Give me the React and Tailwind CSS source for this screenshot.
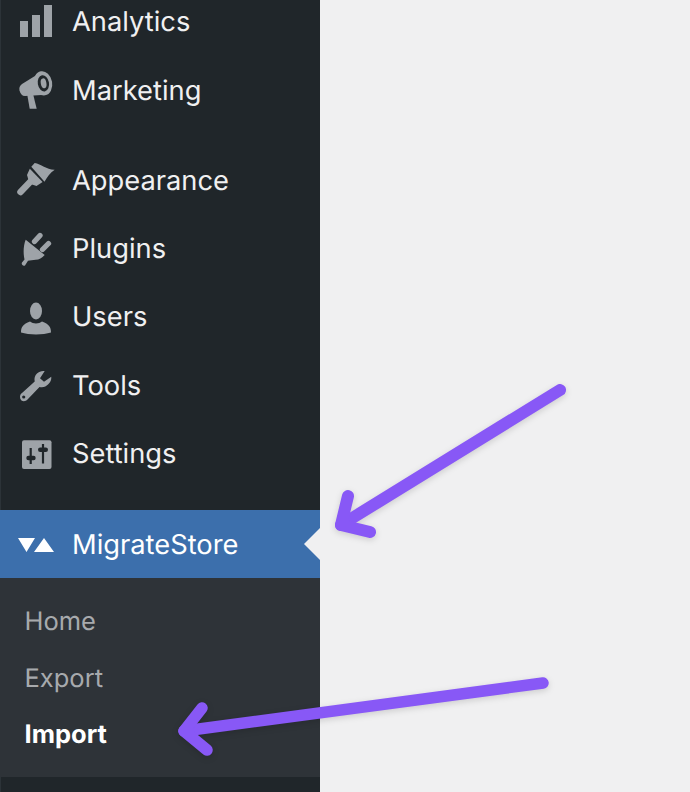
import React from 'react';

const GRAY = '#9ea3a8';
const DARK = '#20262a';

// icons are drawn on a 72x68 box, same size as the space left of each label
function Icon({ children }) {
  return (
    <svg viewBox="0 0 72 68" className="w-[72px] h-[68px] shrink-0" fill={GRAY}>
      {children}
    </svg>
  );
}

const AnalyticsIcon = () => (
  <Icon>
    <rect x="20" y="33" width="8" height="16" />
    <rect x="32" y="27" width="8" height="22" />
    <rect x="44" y="17" width="8" height="32" />
  </Icon>
);

const MarketingIcon = () => (
  <Icon>
    <path d="M27.3 39 L29.7 52.7 L36.7 52.7 L33.3 39 Z" />
    <path d="M41 16.3 L22 28 C19.5 30 19 32 19.5 34.5 C20.5 38 22 40 25 40 L46 38.8 Z" />
    <ellipse cx="43" cy="27.3" rx="9.2" ry="12.2" transform="rotate(-10 43 27.3)" />
    <ellipse cx="43.4" cy="27.3" rx="5.6" ry="8.2" fill={DARK} transform="rotate(-10 43.4 27.3)" />
    <ellipse cx="43.6" cy="27.3" rx="2.8" ry="5" transform="rotate(-10 43.6 27.3)" />
  </Icon>
);

const AppearanceIcon = () => (
  <Icon>
    <path d="M31.3 20.8 L34.7 17 C41 18 47 24 54.7 23.7 C50 27 47 31 44.5 35.8 Z" />
    <path d="M27 29 L29.8 22.8 L42.6 36 L36.5 40 L32 38.5 L28.5 34 Z" />
    <path d="M31 35 L20.5 46" stroke={GRAY} strokeWidth="6.5" strokeLinecap="round" fill="none" />
  </Icon>
);

const PluginsIcon = () => (
  <Icon>
    <path d="M34.5 26.5 L40 20.5 M42.5 34.5 L48.5 28.5" stroke={GRAY} strokeWidth="5.3" strokeLinecap="round" fill="none" />
    <path d="M25.7 24.7 L44.7 40 C42 43 39 44.7 35.7 44.7 C33 45.2 30 45.2 28 45.7 L25 50.5 C23 51.5 21 49.5 22 47.5 L24.5 44.5 C23 38 23.5 30 25.7 24.7 Z" />
  </Icon>
);

const UsersIcon = () => (
  <Icon>
    <ellipse cx="36" cy="28" rx="6" ry="8.5" />
    <path d="M21 49.5 C21 44 23 41 30 38.5 C33 41 39 41 42 38.5 C49 41 51 44 51 49.5 C43 52 29 52 21 49.5 Z" />
  </Icon>
);

const ToolsIcon = () => (
  <Icon>
    <path
      fillRule="evenodd"
      d="M44.7 20 L40 27.3 L44 30.7 L51.3 25.7 C51.5 29 50.5 31 48 33.5 C46 35.5 43.5 36.8 39.5 36 L27.5 48.5 C25 51.5 20 50.5 20 46 C20 44.5 20.5 43 22 42 L34.7 30.5 C34 27 35 24.5 37 22.5 C39 20.5 41.5 19.7 44.7 20 Z"
    />
    <circle cx="23.7" cy="46" r="1.6" fill={DARK} />
  </Icon>
);

const SettingsIcon = () => (
  <Icon>
    <rect x="22" y="21.3" width="29.5" height="28.7" rx="2" />
    <path d="M30.7 29 V45 M43 25 V44.5" stroke={DARK} strokeWidth="2.2" fill="none" />
    <path d="M28.5 39 H33.5 M40.2 30.7 H45.8" stroke={DARK} strokeWidth="4.4" strokeLinecap="round" fill="none" />
  </Icon>
);

const MigrateIcon = () => (
  <Icon>
    <path d="M18 28 H35 L26.5 42 Z M34 42 L44 28 L54 42 Z" fill="#fff" />
  </Icon>
);

const menuTop = [
  { label: 'Analytics', icon: AnalyticsIcon },
  { label: 'Marketing', icon: MarketingIcon },
];

const menuMid = [
  { label: 'Appearance', icon: AppearanceIcon },
  { label: 'Plugins', icon: PluginsIcon },
  { label: 'Users', icon: UsersIcon },
  { label: 'Tools', icon: ToolsIcon },
  { label: 'Settings', icon: SettingsIcon },
];

function MenuRow({ label, icon: IconEl }) {
  return (
    <div className="flex items-center h-[68.25px] text-[#f0f0f1] text-[27.3px]">
      <IconEl />
      <span className="pt-[2px]">{label}</span>
    </div>
  );
}

export default function App() {
  return (
    <div className="relative flex w-[690px] h-[792px] overflow-hidden bg-[#f0f0f1] font-['Inter',sans-serif] [text-rendering:geometricPrecision]">
      <aside className="w-[320px] shrink-0 bg-[#20262a] border-l border-[#2c3338]">
        <div className="-ml-px -mt-[12.25px]">
          {menuTop.map((item) => (
            <MenuRow key={item.label} {...item} />
          ))}
        </div>
        <div className="-ml-px mt-[22px]">
          {menuMid.map((item) => (
            <MenuRow key={item.label} {...item} />
          ))}
        </div>
        <div className="relative -ml-px mt-[22.5px] flex items-center h-[68px] bg-[#3c6fac] text-white text-[27.3px]">
          <MigrateIcon />
          <span className="pt-[2px]">MigrateStore</span>
          <div className="absolute right-0 top-[18px] border-y-[16px] border-r-[16px] border-y-transparent border-r-[#f0f0f1]" />
        </div>
        <div className="-ml-px h-[199px] bg-[#2e3338] pt-[15px] text-[25.5px] text-[#a7aaad]">
          <div className="pl-[24.5px] pt-[2px] h-[56.5px] flex items-center">Home</div>
          <div className="pl-[24.5px] pt-[2px] h-[56.5px] flex items-center">Export</div>
          <div className="pl-[24.5px] pt-[2px] h-[56.5px] flex items-center font-bold text-white">Import</div>
        </div>
      </aside>

      {/* annotation arrows on top of the screenshot */}
      <svg
        viewBox="0 0 690 792"
        className="absolute inset-0 w-[690px] h-[792px] drop-shadow-[0_2px_3px_rgba(0,0,0,0.15)]"
        fill="none"
        stroke="#8858f6"
        strokeLinecap="round"
        strokeLinejoin="round"
      >
        <g strokeWidth="12">
          <path d="M560 390 L341 525" />
          <path d="M348 496 L341 525 L370 532" />
        </g>
        <g strokeWidth="11.5">
          <path d="M543 683 L184 731" />
          <path d="M202 708 L184 731 L207 750" />
        </g>
      </svg>
    </div>
  );
}
